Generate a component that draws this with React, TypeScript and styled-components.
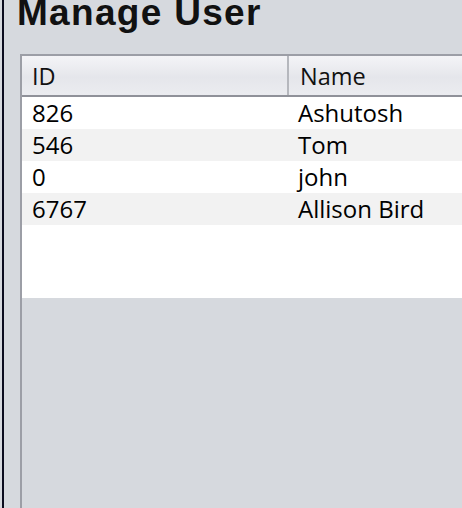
import React from "react";
import styled, { createGlobalStyle } from "styled-components";

const Global = createGlobalStyle`
  html, body {
    margin: 0;
    padding: 0;
    width: 462px;
    height: 508px;
    overflow: hidden;
    background: #d6d9de;
  }
  #root { height: 508px; }
`;

const Frame = styled.div`
  margin-left: 2px;
  height: 508px;
  border-left: 2px solid #0b0c1e;
  display: flex;
  flex-direction: column;
  background: #d6d9de;
`;

const Title = styled.h1`
  margin: -6px 0 23px 13px;
  font-family: "Liberation Sans", Arial, sans-serif;
  font-weight: 700;
  font-size: 37px;
  line-height: 37px;
  letter-spacing: 1.3px;
  color: #111;
  white-space: nowrap;
`;

const ScrollPane = styled.div`
  margin-left: 16px;
  flex: 1;
  width: 480px;
  border-left: 2px solid #9c9ea6;
  border-top: 2px solid #9c9ea6;
  background: #d6d9de;
`;

const Viewport = styled.div`
  height: 242px;
  background: #ffffff;
`;

const HeaderRow = styled.div`
  display: grid;
  grid-template-columns: 265px 2px 1fr;
  height: 39px;
  border-bottom: 2px solid #8f9199;
  background: linear-gradient(#f4f4f7, #e5e6eb 55%, #ebecf0);
`;

const HeaderCell = styled.div<{ $pad: number }>`
  display: flex;
  align-items: center;
  padding-left: ${(p) => p.$pad}px;
  font-family: "Open Sans", "Liberation Sans", sans-serif;
  font-size: 23.5px;
  color: #111;
`;

const Divider = styled.div`
  background: #b5b7bd;
`;

const Row = styled.div<{ $alt: boolean }>`
  display: grid;
  grid-template-columns: 267px 1fr;
  height: 32px;
  background: ${(p) => (p.$alt ? "#f2f2f2" : "#ffffff")};
`;

const Cell = styled.div<{ $pad: number }>`
  display: flex;
  align-items: center;
  padding-left: ${(p) => p.$pad}px;
  font-family: "Open Sans", "Liberation Sans", sans-serif;
  font-size: 24px;
  line-height: 32px;
  color: #000;
  white-space: nowrap;
`;

const users = [
  { id: "826", name: "Ashutosh" },
  { id: "546", name: "Tom" },
  { id: "0", name: "john" },
  { id: "6767", name: "Allison Bird" },
];

export default function App() {
  return (
    <>
      <Global />
      <Frame>
        <Title>Manage User</Title>
        <ScrollPane>
          <Viewport>
            <HeaderRow>
              <HeaderCell $pad={10}>ID</HeaderCell>
              <Divider />
              <HeaderCell $pad={11}>Name</HeaderCell>
            </HeaderRow>
            {users.map((u, i) => (
              <Row key={u.id} $alt={i % 2 === 1}>
                <Cell $pad={10}>{u.id}</Cell>
                <Cell $pad={9}>{u.name}</Cell>
              </Row>
            ))}
          </Viewport>
        </ScrollPane>
      </Frame>
    </>
  );
}
